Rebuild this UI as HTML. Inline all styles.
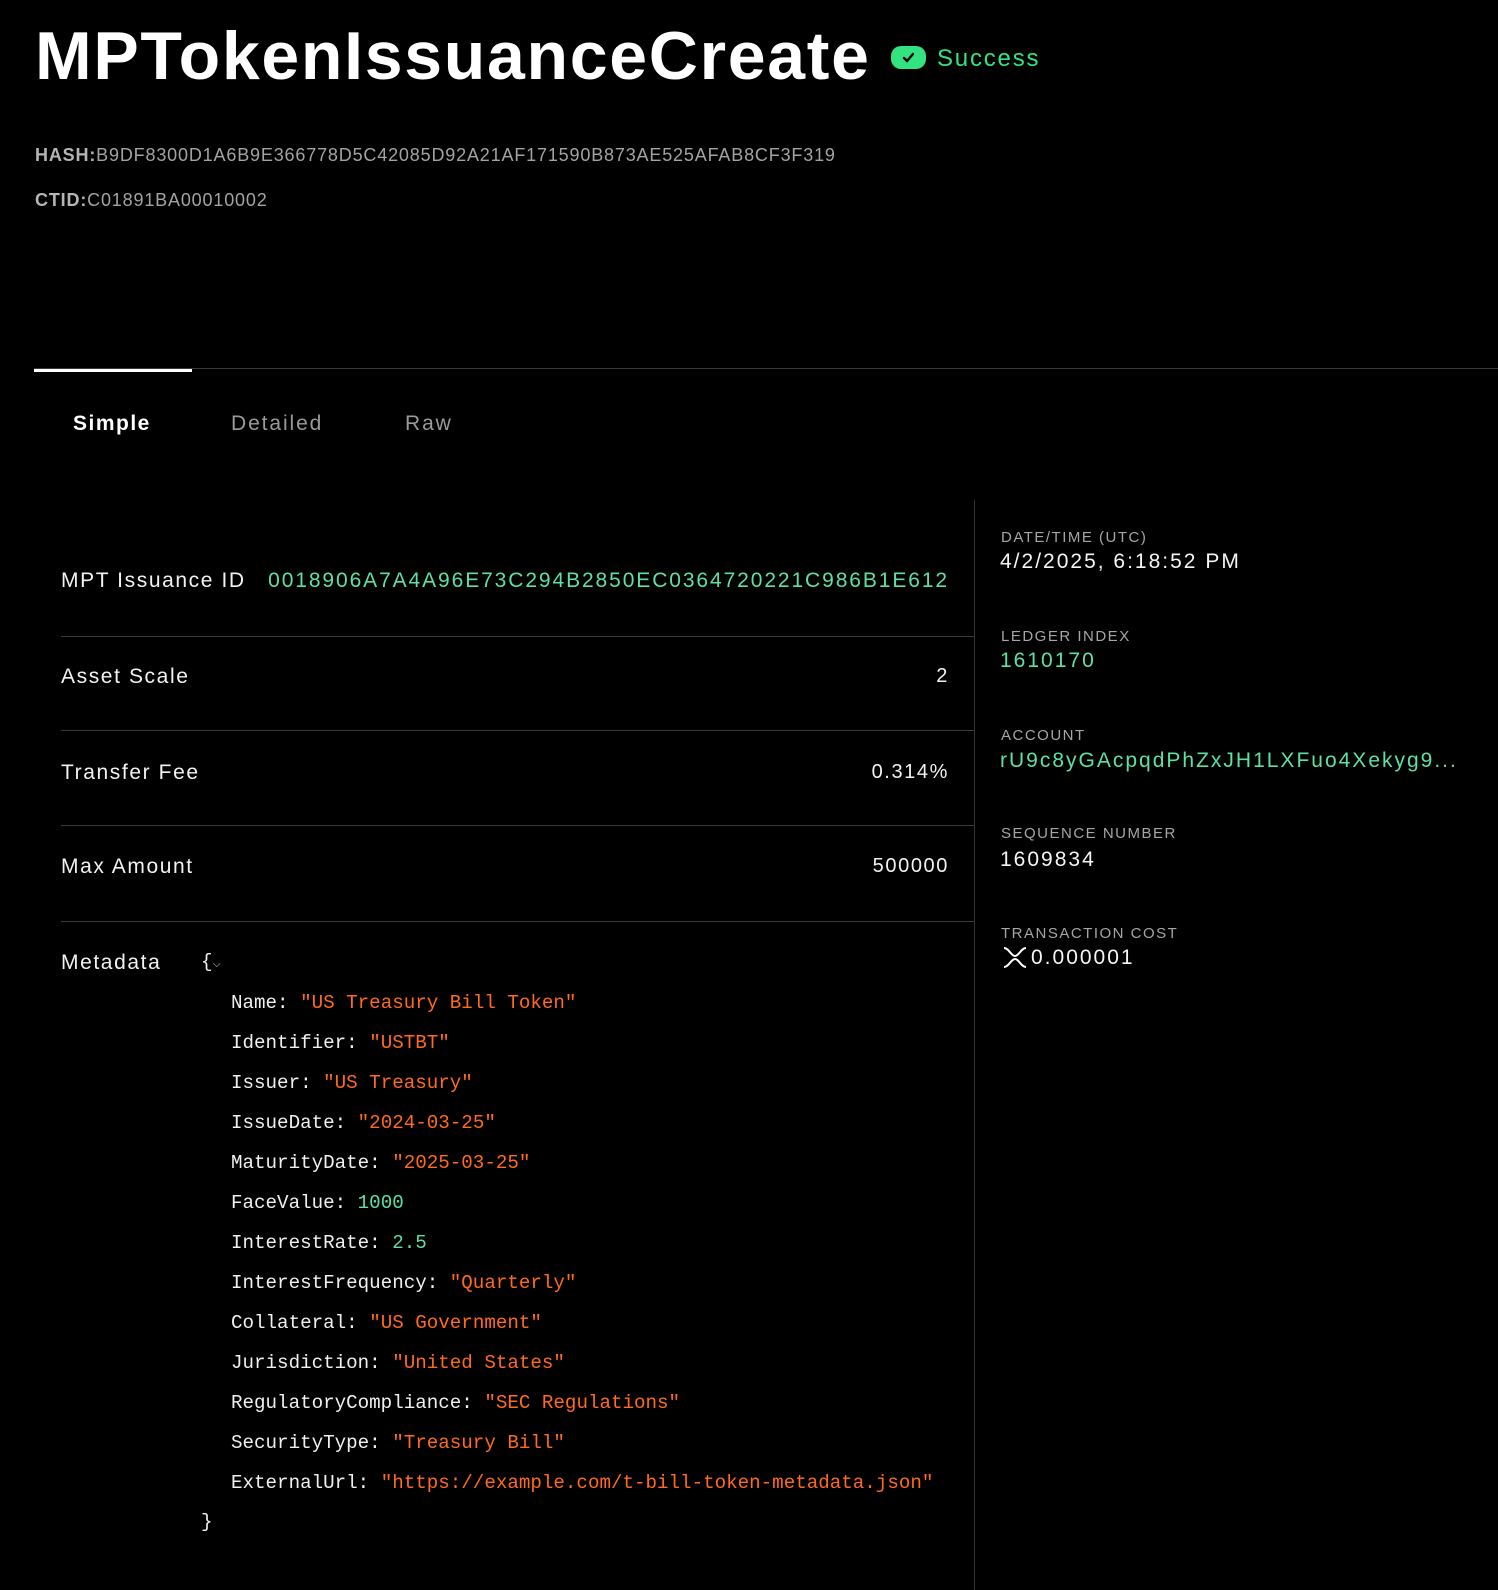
<!DOCTYPE html>
<html><head><meta charset="utf-8"><style>
*{margin:0;padding:0;box-sizing:border-box}
body{width:1498px;height:1590px;background:#000;color:#fff;font-family:"Liberation Sans",sans-serif;position:relative;overflow:hidden}
.a{position:absolute;white-space:nowrap;line-height:1}
.t{font-size:68px;font-weight:bold;left:35px;top:22px;letter-spacing:1.7px}
.h{font-size:18px;color:#a3a3a3;left:35px;letter-spacing:0.83px}
.h b{color:#b5b5b5}
.tab{font-size:21px;letter-spacing:1.9px;top:413px;color:#9a9a9a}
.lab{font-size:21px;letter-spacing:1.6px;left:61px;color:#f2f2f2}
.val{font-size:20px;letter-spacing:1.6px;right:549px;color:#f2f2f2}
.ln{position:absolute;left:61px;width:913px;height:1px;background:#3a3a3a}
.g,.rv.g{color:#5fe0a3}
.code{font-family:"Liberation Mono",monospace;font-size:19.2px;left:231px;color:#f0f0f0}
.s{color:#ff6a1f}
.n{color:#5fe0a3}
.rl{font-size:15px;letter-spacing:1.5px;color:#a6a6a6;left:1001px}
.rv{font-size:21px;letter-spacing:2px;left:1000px;color:#f5f5f5}
</style></head><body>
<div class="a t">MPTokenIssuanceCreate</div>
<div style="position:absolute;left:891px;top:46px;width:35px;height:23px;border-radius:10px;background:#32e37f"></div>
<svg style="position:absolute;left:900px;top:50px" width="17" height="15" viewBox="0 0 17 15"><path d="M4 8 L7 11 L13 4" stroke="#000" stroke-width="2.4" fill="none" stroke-linecap="round"/></svg>
<div class="a" style="left:937px;top:47px;font-size:24px;letter-spacing:1.8px;color:#32e37f">Success</div>
<div class="a h" style="top:146px"><b>HASH:</b>B9DF8300D1A6B9E366778D5C42085D92A21AF171590B873AE525AFAB8CF3F319</div>
<div class="a h" style="top:191px"><b>CTID:</b>C01891BA00010002</div>
<div style="position:absolute;left:34px;top:368px;width:1464px;height:1px;background:#3a3a3a"></div>
<div style="position:absolute;left:34px;top:369px;width:158px;height:3px;background:#fff"></div>
<div class="a tab" style="left:73px;color:#fff;font-weight:bold;letter-spacing:1.5px">Simple</div>
<div class="a tab" style="left:231px">Detailed</div>
<div class="a tab" style="left:405px">Raw</div>
<div style="position:absolute;left:974px;top:500px;width:1px;height:1090px;background:#333"></div>
<div class="a lab" style="top:570px">MPT Issuance ID</div>
<div class="a val g" style="top:570px;font-size:21px;letter-spacing:1.9px">0018906A7A4A96E73C294B2850EC0364720221C986B1E612</div>
<div class="ln" style="top:636px"></div>
<div class="a lab" style="top:666px">Asset Scale</div>
<div class="a val" style="top:666px">2</div>
<div class="ln" style="top:730px"></div>
<div class="a lab" style="top:762px">Transfer Fee</div>
<div class="a val" style="top:762px">0.314%</div>
<div class="ln" style="top:825px"></div>
<div class="a lab" style="top:856px">Max Amount</div>
<div class="a val" style="top:856px">500000</div>
<div class="ln" style="top:921px"></div>
<div class="a lab" style="top:952px">Metadata</div>
<div class="a code" style="left:201px;top:953px">{<span style="color:#888;font-size:14px">⌵</span></div>
<div class="a code" style="top:994px">Name: <span class="s">"US Treasury Bill Token"</span></div>
<div class="a code" style="top:1034px">Identifier: <span class="s">"USTBT"</span></div>
<div class="a code" style="top:1074px">Issuer: <span class="s">"US Treasury"</span></div>
<div class="a code" style="top:1114px">IssueDate: <span class="s">"2024-03-25"</span></div>
<div class="a code" style="top:1154px">MaturityDate: <span class="s">"2025-03-25"</span></div>
<div class="a code" style="top:1194px">FaceValue: <span class="n">1000</span></div>
<div class="a code" style="top:1234px">InterestRate: <span class="n">2.5</span></div>
<div class="a code" style="top:1274px">InterestFrequency: <span class="s">"Quarterly"</span></div>
<div class="a code" style="top:1314px">Collateral: <span class="s">"US Government"</span></div>
<div class="a code" style="top:1354px">Jurisdiction: <span class="s">"United States"</span></div>
<div class="a code" style="top:1394px">RegulatoryCompliance: <span class="s">"SEC Regulations"</span></div>
<div class="a code" style="top:1434px">SecurityType: <span class="s">"Treasury Bill"</span></div>
<div class="a code" style="top:1474px">ExternalUrl: <span class="s">"https://example.com/t-bill-token-metadata.json"</span></div>
<div class="a code" style="left:201px;top:1513px">}</div>
<div class="a rl" style="top:530px">DATE/TIME (UTC)</div>
<div class="a rv" style="top:551px">4/2/2025, 6:18:52 PM</div>
<div class="a rl" style="top:629px">LEDGER INDEX</div>
<div class="a rv g" style="top:650px">1610170</div>
<div class="a rl" style="top:728px">ACCOUNT</div>
<div class="a rv g" style="top:750px">rU9c8yGAcpqdPhZxJH1LXFuo4Xekyg9...</div>
<div class="a rl" style="top:826px">SEQUENCE NUMBER</div>
<div class="a rv" style="top:849px">1609834</div>
<div class="a rl" style="top:926px">TRANSACTION COST</div>
<svg style="position:absolute;left:1003px;top:947px" width="24" height="21" viewBox="0 0 24 21"><path d="M1 1 C6 1 8 9 12 9 C16 9 18 1 23 1 M1 20 C6 20 8 12 12 12 C16 12 18 20 23 20" stroke="#fff" stroke-width="2" fill="none"/></svg>
<div class="a rv" style="left:1031px;top:947px">0.000001</div>
</body></html>
